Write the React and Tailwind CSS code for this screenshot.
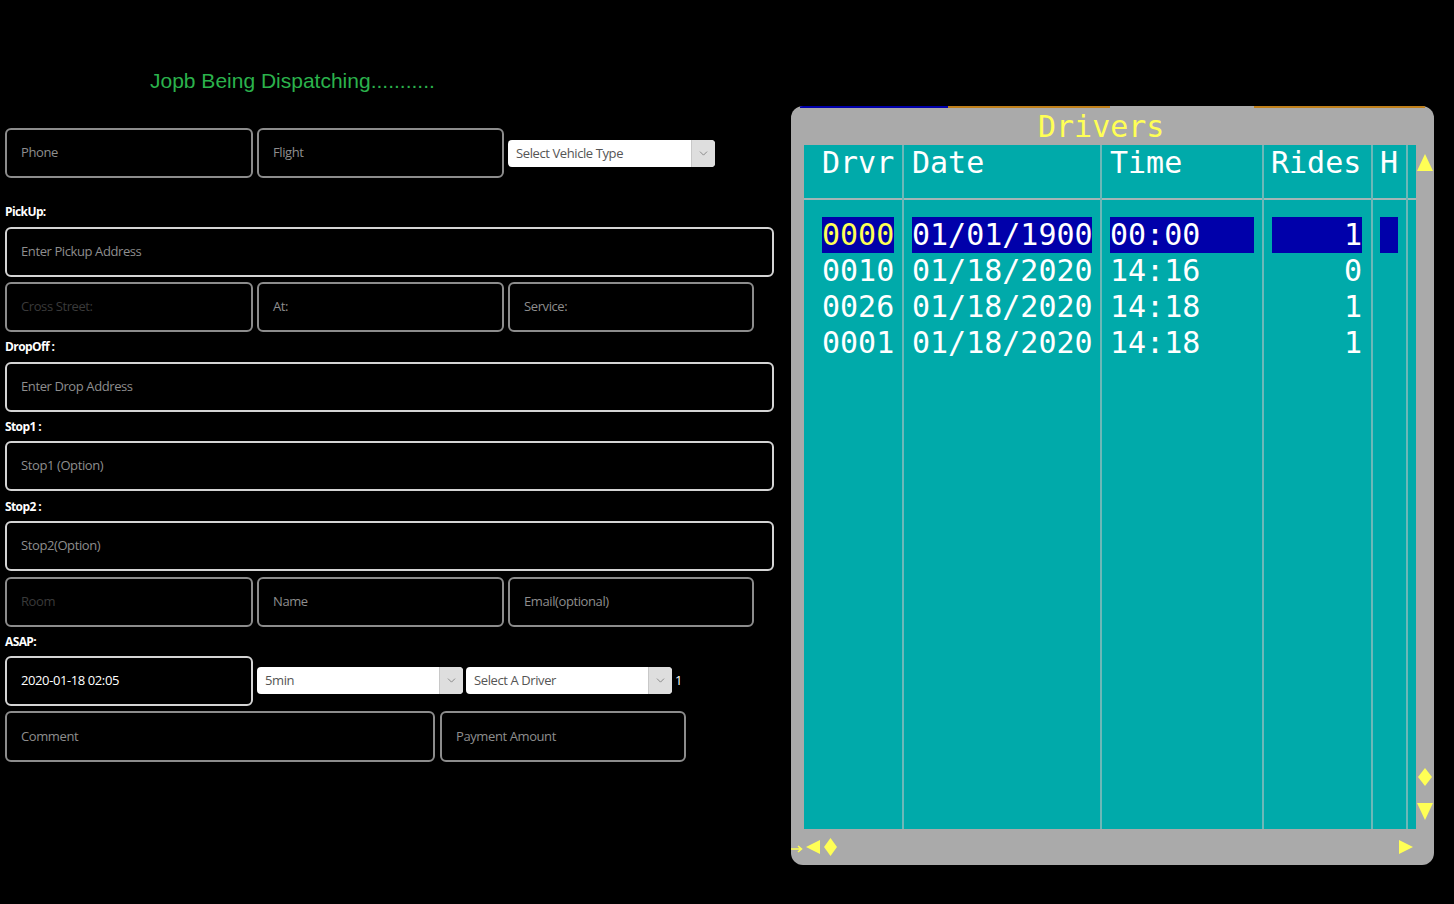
import { ChevronDown } from "lucide-react";

const rows = [
    ["0000", "01/01/1900", "00:00", "1"],
    ["0010", "01/18/2020", "14:16", "0"],
    ["0026", "01/18/2020", "14:18", "1"],
    ["0001", "01/18/2020", "14:18", "1"],
];

function Field({ text, className = "", light, dim, value }) {
    const border = light ? "border-[#d4d4d4]" : "border-[#8c8c8c]";
    const color = value ? "text-white" : dim ? "text-[#3a3a3a]" : "text-[#8e8e8e]";
    return (
        <div className={`h-[50px] shrink-0 border-2 ${border} rounded-[6px] flex items-center pl-[14px] ${className}`}>
            <span className={`text-[13px] tracking-[-0.4px] ${color}`}>{text}</span>
        </div>
    );
}

function Label({ text, className = "" }) {
    return (
        <div className={`h-[16px] leading-[16px] text-[12px] font-bold tracking-[-0.6px] text-white ${className}`}>
            {text}
        </div>
    );
}

function Select({ text, className = "" }) {
    return (
        <div className={`h-[27px] bg-white rounded-[4px] flex overflow-hidden ${className}`}>
            <div className="flex-1 flex items-center pl-[8px] text-[13px] tracking-[-0.4px] text-[#555]">{text}</div>
            <div className="w-[24px] bg-[#dedede] border-l border-[#c8c8c8] flex items-center justify-center">
                <ChevronDown size={13} strokeWidth={1.5} className="text-[#777]" />
            </div>
        </div>
    );
}

function Tri({ dir, className = "" }) {
    const pts = {
        up: "8,0 16,17 0,17",
        down: "0,0 16,0 8,17",
        left: "0,7 14,0 14,14",
        right: "0,0 14,7 0,14",
    }[dir];
    const size = dir === "up" || dir === "down" ? [16, 17] : [14, 14];
    return (
        <svg width={size[0]} height={size[1]} viewBox={`0 0 ${size[0]} ${size[1]}`} className={className}>
            <polygon points={pts} fill="#ffff55" />
        </svg>
    );
}

function Diamond({ w = 14, h = 18, className = "" }) {
    return (
        <svg width={w} height={h} viewBox={`0 0 ${w} ${h}`} className={className}>
            <polygon points={`${w / 2},0 ${w},${h / 2} ${w / 2},${h} 0,${h / 2}`} fill="#ffff55" />
        </svg>
    );
}

function Column({ width, header, pl, children, last }) {
    return (
        <div className={`${width} flex flex-col shrink-0 ${last ? "" : "border-r-2 border-[#6cb8b8]"}`}>
            <div className={`h-[36px] leading-[36px] ${pl}`}>{header}</div>
            <div className="h-[17px]" />
            <div className="h-[2px] bg-[#a2b6b6]" />
            <div className="h-[17px]" />
            {children}
        </div>
    );
}

function Cell({ pl, w, hi, yellow, right, children }) {
    return (
        <div className={`h-[36px] flex ${pl}`}>
            <span
                className={`block h-[36px] leading-[36px] ${w} ${right ? "text-right" : ""} ${hi ? "bg-[#0000aa]" : ""} ${yellow ? "text-[#ffff55]" : ""}`}
            >
                {children}
            </span>
        </div>
    );
}

function DriversPanel() {
    return (
        <div
            className="mt-[106px] w-[643px] h-[759px] bg-[#aaaaaa] rounded-[12px] overflow-hidden flex flex-col shrink-0"
            style={{ fontFamily: "'DejaVu Sans Mono', 'Liberation Mono', monospace" }}
        >
            <div className="h-[2px] flex shrink-0">
                <div className="w-[9px]" />
                <div className="w-[148px] bg-[#0000aa]" />
                <div className="w-[162px] bg-[#c0801a]" />
                <div className="w-[144px]" />
                <div className="w-[171px] bg-[#c0801a]" />
            </div>
            <div className="h-[37px] leading-[37px] pl-[247px] text-[30px] text-[#ffff55]">Drivers</div>

            <div className="flex h-[684px]">
                <div className="w-[13px] shrink-0" />
                <div className="w-[612px] bg-[#00aaaa] flex text-[30px] text-white">
                    <Column width="w-[100px]" header="Drvr" pl="pl-[18px]">
                        {rows.map((r, i) => (
                            <Cell key={i} pl="pl-[18px]" w="w-[72px]" hi={i === 0} yellow={i === 0}>{r[0]}</Cell>
                        ))}
                    </Column>
                    <Column width="w-[198px]" header="Date" pl="pl-[8px]">
                        {rows.map((r, i) => (
                            <Cell key={i} pl="pl-[8px]" w="w-[180px]" hi={i === 0}>{r[1]}</Cell>
                        ))}
                    </Column>
                    <Column width="w-[162px]" header="Time" pl="pl-[8px]">
                        {rows.map((r, i) => (
                            <Cell key={i} pl="pl-[8px]" w="w-[144px]" hi={i === 0}>{r[2]}</Cell>
                        ))}
                    </Column>
                    <Column width="w-[109px]" header="Rides" pl="pl-[7px]">
                        {rows.map((r, i) => (
                            <Cell key={i} pl="pl-[8px]" w="w-[90px]" hi={i === 0} right>{r[3]}</Cell>
                        ))}
                    </Column>
                    <Column width="w-[35px]" header="H" pl="pl-[7px]">
                        <Cell pl="pl-[7px]" w="w-[18px]" hi />
                    </Column>
                    <Column width="w-[8px]" header="" pl="" last />
                </div>
                <div className="w-[18px] flex flex-col items-center shrink-0">
                    <Tri dir="up" className="mt-[9px]" />
                    <div className="flex-1" />
                    <Diamond w={14} h={18} />
                    <Tri dir="down" className="mt-[17px] mb-[9px]" />
                </div>
            </div>

            <div className="h-[36px] flex items-center shrink-0">
                <svg width="12" height="10" viewBox="0 0 12 10" className="mt-[3px]">
                    <path d="M0 5 H10 M7 2 L10.5 5 L7 8" stroke="#ffff55" strokeWidth="1.6" fill="none" />
                </svg>
                <Tri dir="left" className="ml-[3px]" />
                <Diamond w={13} h={18} className="ml-[4px]" />
                <div className="flex-1" />
                <Tri dir="right" className="mr-[21px]" />
            </div>
        </div>
    );
}

export default function App() {
    return (
        <div className="w-[1454px] h-[904px] bg-black flex overflow-hidden" style={{ fontFamily: "'Open Sans', sans-serif" }}>
            <div className="w-[791px] pl-[5px] flex flex-col shrink-0">
                <div
                    className="mt-[69px] pl-[145px] h-[24px] leading-[24px] text-[21px] text-[#2bb24c]"
                    style={{ fontFamily: "'Liberation Sans', Arial, sans-serif" }}
                >
                    Jopb Being Dispatching...........
                </div>

                <div className="mt-[35px] flex items-start gap-[4px]">
                    <Field text="Phone" className="w-[248px]" />
                    <Field text="Flight" className="w-[247px]" />
                    <Select text="Select Vehicle Type" className="w-[207px] mt-[12px]" />
                </div>

                <Label text="PickUp:" className="mt-[26px]" />
                <Field text="Enter Pickup Address" light className="w-[769px] mt-[7px]" />

                <div className="mt-[5px] flex gap-[4px]">
                    <Field text="Cross Street:" dim className="w-[248px]" />
                    <Field text="At:" className="w-[247px]" />
                    <Field text="Service:" className="w-[246px]" />
                </div>

                <Label text="DropOff :" className="mt-[7px]" />
                <Field text="Enter Drop Address" light className="w-[769px] mt-[7px]" />

                <Label text="Stop1 :" className="mt-[7px]" />
                <Field text="Stop1 (Option)" light className="w-[769px] mt-[6px]" />

                <Label text="Stop2 :" className="mt-[8px]" />
                <Field text="Stop2(Option)" light className="w-[769px] mt-[6px]" />

                <div className="mt-[6px] flex gap-[4px]">
                    <Field text="Room" dim className="w-[248px]" />
                    <Field text="Name" className="w-[247px]" />
                    <Field text="Email(optional)" className="w-[246px]" />
                </div>

                <Label text="ASAP:" className="mt-[7px]" />
                <div className="mt-[6px] flex items-start">
                    <Field text="2020-01-18 02:05" value light className="w-[248px]" />
                    <Select text="5min" className="w-[206px] mt-[11px] ml-[4px]" />
                    <Select text="Select A Driver" className="w-[206px] mt-[11px] ml-[3px]" />
                    <span className="mt-[15px] ml-[3px] text-[13px] leading-[18px] text-white">1</span>
                </div>

                <div className="mt-[5px] flex gap-[5px]">
                    <Field text="Comment" className="w-[430px] h-[51px]" />
                    <Field text="Payment Amount" className="w-[246px] h-[51px]" />
                </div>
            </div>

            <DriversPanel />
        </div>
    );
}
